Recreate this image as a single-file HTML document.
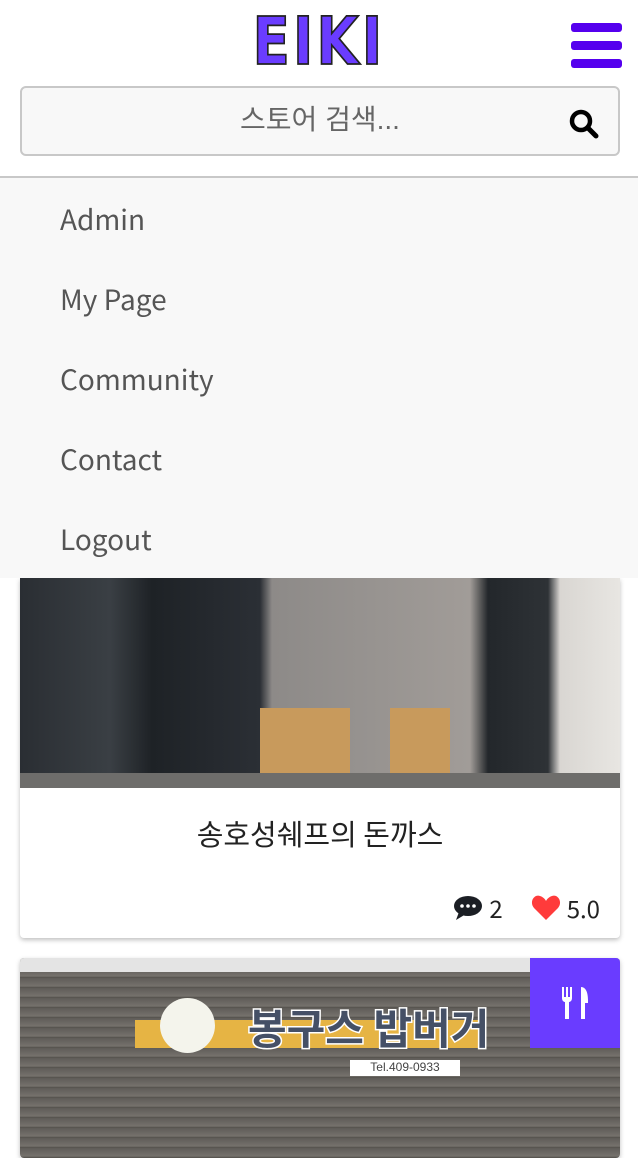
<!DOCTYPE html>
<html><head><meta charset="utf-8"><style>
*{box-sizing:border-box;margin:0;padding:0}
body{width:638px;height:1130px;overflow:hidden;background:#fff;font-family:"Liberation Sans","Noto Sans CJK KR",sans-serif;position:relative}
.logo{position:absolute;left:0;width:638px;top:10px;text-align:center;font-family:"DejaVu Sans Condensed","Liberation Sans",sans-serif;font-weight:bold;font-size:56px;color:#6a3cff;-webkit-text-stroke:1.5px #222;letter-spacing:3px;line-height:66px;transform:scale(1.08,1.18);transform-origin:50% 50%}
.burger{position:absolute;left:571px;top:23px;width:51px}
.burger div{height:9px;background:#5500ee;border-radius:3px;margin-bottom:9px}
.search{position:absolute;left:20px;top:86px;width:600px;height:70px;border:2px solid #c8c8c8;border-radius:6px;background:#f8f8f8;text-align:center;line-height:64px;font-size:28px;color:#666}
.menu{position:absolute;left:0;top:176px;width:638px;height:402px;background:#f8f8f8;border-top:2px solid #c8c8c8}
.menu div{position:absolute;left:60px;font-size:28px;color:#555;font-family:"Noto Sans CJK KR","Liberation Sans",sans-serif}
.card{position:absolute;left:20px;width:600px;background:#fff;box-shadow:0 2px 5px rgba(0,0,0,.25);border-radius:0 0 4px 4px;overflow:hidden}
</style></head><body>
<div class="logo">EIKI</div>
<div class="burger"><div></div><div></div><div></div></div>
<div class="search">스토어 검색...
<svg style="position:absolute;left:546px;top:20px" width="32" height="32" viewBox="0 0 32 32"><circle cx="13" cy="13" r="9" fill="none" stroke="#000" stroke-width="4.5"/><path d="M20 20L28 28" stroke="#000" stroke-width="5" stroke-linecap="round"/></svg></div>
<div class="card" style="top:578px;height:360px">
 <div style="height:210px;background:linear-gradient(90deg,#2a2e33 0,#3a3f44 15%,#1e2226 22%,#2b2f35 40%,#8d8a88 42%,#a19c98 75%,#23272b 78%,#2e3236 88%,#d9d6d2 90%,#e8e6e2 100%);position:relative">
  <div style="position:absolute;left:240px;top:130px;width:90px;height:80px;background:#c89a5c"></div>
  <div style="position:absolute;left:370px;top:130px;width:60px;height:80px;background:#c89a5c"></div>
  <div style="position:absolute;left:0;top:195px;width:600px;height:15px;background:#6e6d6b"></div>
 </div>
 <div style="text-align:center;font-size:29px;color:#222;margin-top:24px;font-family:'Noto Sans CJK KR',sans-serif">송호성쉐프의 돈까스</div>
 <div style="position:absolute;right:20px;top:312px;font-size:24px;color:#222;display:flex;align-items:center;font-family:'Noto Sans CJK KR',sans-serif">
  <svg width="30" height="26" viewBox="0 0 30 26"><ellipse cx="15" cy="11" rx="14" ry="10" fill="#1b1e24"/><path d="M6 17L3 25L13 19Z" fill="#1b1e24"/><circle cx="9" cy="11" r="1.8" fill="#fff"/><circle cx="15" cy="11" r="1.8" fill="#fff"/><circle cx="21" cy="11" r="1.8" fill="#fff"/></svg>
  <span style="margin:0 28px 0 6px">2</span>
  <svg width="30" height="26" viewBox="0 0 30 26"><path d="M15 25L3 13C-2 7 3 -1 9 1C12 2 14 4 15 6C16 4 18 2 21 1C27 -1 32 7 27 13Z" fill="#ff3b3b"/></svg>
  <span style="margin-left:6px">5.0</span>
 </div>
</div>
<div class="card" style="top:958px;height:200px;border-radius:4px">
 <div style="height:200px;background:repeating-linear-gradient(180deg,#5f5c58 0,#75716c 8px,#4e4b47 10px);position:relative">
  <div style="position:absolute;left:0;top:0;width:600px;height:14px;background:#e4e4e4"></div>
  <div style="position:absolute;left:115px;top:62px;width:350px;height:28px;background:#e6b444"></div>
  <div style="position:absolute;left:140px;top:40px;width:55px;height:55px;border-radius:50%;background:#f4f4ec"></div>
  <div style="position:absolute;left:228px;top:38px;font-size:42px;color:#455066;font-weight:bold;-webkit-text-stroke:3px #fff;paint-order:stroke;font-family:'Noto Sans CJK KR',sans-serif">봉구스 밥버거</div>
  <div style="position:absolute;left:330px;top:102px;width:110px;height:16px;background:#fff;font-size:12px;text-align:center;color:#444">Tel.409-0933</div>
 </div>
 <div style="position:absolute;right:0;top:0;width:90px;height:90px;background:#6a3cff;">
  <svg style="position:absolute;left:31px;top:29px" width="28" height="32" viewBox="0 0 28 32"><path d="M1 0h2v10h2V0h2v10h2V0h2v11c0 3-2 4-3 4v17H4V15c-1 0-3-1-3-4Z" fill="#fff"/><path d="M20 0c5 0 7 6 7 13v3h-3v16h-4Z" fill="#fff"/></svg>
 </div>
</div>
<div class="menu">
 <div style="top:21px">Admin</div>
 <div style="top:101px">My Page</div>
 <div style="top:181px">Community</div>
 <div style="top:261px">Contact</div>
 <div style="top:341px">Logout</div>
</div>
</body></html>
